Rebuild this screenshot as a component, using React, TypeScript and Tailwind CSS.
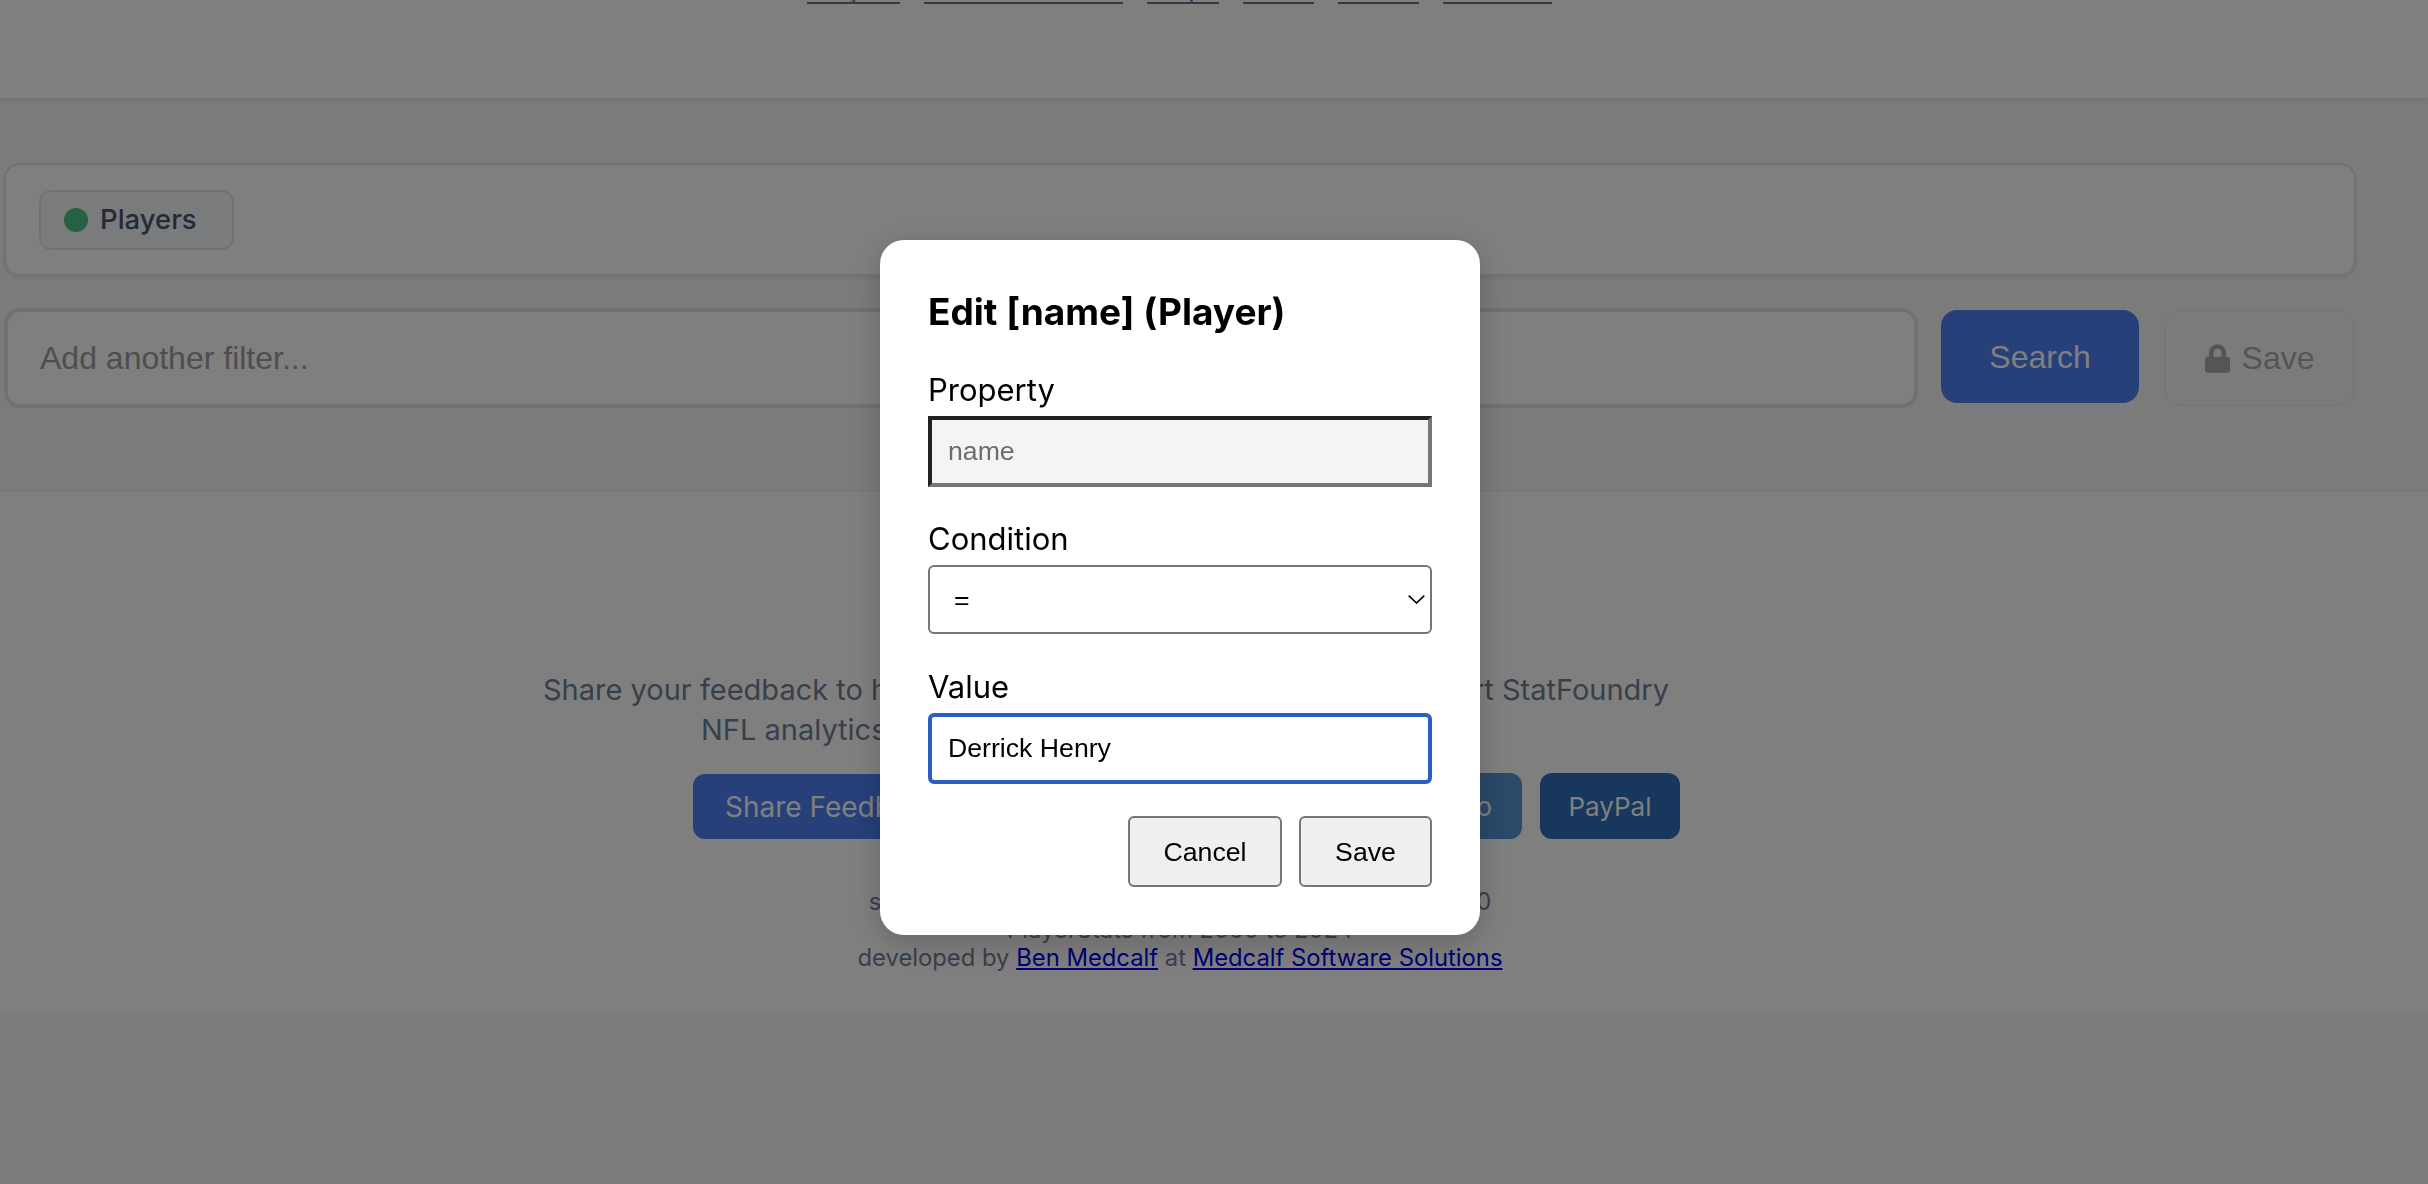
import { FaLock } from 'react-icons/fa'

const sans = "font-['Inter','Liberation_Sans',sans-serif]"
const system = "font-['Liberation_Sans','Arial',sans-serif]"

const navLinks = [
  { label: 'Players', width: 'w-[93px]' },
  { label: 'Leaderboards', width: 'w-[199px]' },
  { label: 'Maps', width: 'w-[72px]' },
  { label: 'Stats', width: 'w-[71px]' },
  { label: 'Teams', width: 'w-[81px]' },
  { label: 'Games', width: 'w-[109px]' },
]

function Header() {
  return (
    <header className="h-[98px] overflow-hidden bg-white shadow-[0_2px_6px_rgba(0,0,0,0.1)] relative">
      <nav className="flex gap-[24px] pl-[807px] -mt-[26px] text-[28px] leading-[28px] text-[#718096]">
        {navLinks.map(link => (
          <a key={link.label} className={`h-[30px] block whitespace-nowrap border-b-2 border-[#667088] ${link.width}`}>
            {link.label}
          </a>
        ))}
      </nav>
    </header>
  )
}

function FilterBar() {
  return (
    <section className="bg-[#f6f7f9] h-[392px] pl-[4px] pt-[65px]">
      <div className="w-[2352px] h-[113px] rounded-[16px] border-2 border-[#e2e5e9] bg-white shadow-[0_2px_4px_rgba(0,0,0,0.1)] pl-[33px] pt-[25px]">
        <div className="w-[195px] h-[60px] rounded-[12px] border-2 border-[#e2e5e9] bg-[#f5f7fa] flex items-center gap-[12px] pl-[23px]">
          <span className="w-[24px] h-[24px] rounded-full bg-[#4fc084]" />
          <span className="text-[27.5px] font-medium text-[#4a5270]">Players</span>
        </div>
      </div>

      <div className="flex items-start mt-[32px]">
        <div className={`${system} w-[1914px] h-[100px] rounded-[16px] border-4 border-[#dde2e8] bg-white flex items-center pl-[32px] text-[32px] text-[#9c9c9c]`}>
          Add another filter...
        </div>
        <button className={`${system} ml-[23px] mt-[2px] w-[198px] h-[93px] rounded-[16px] bg-[#4e80f4] text-white text-[32px]`}>
          Search
        </button>
        <button className={`${system} ml-[25px] mt-[2px] w-[191px] h-[96px] rounded-[16px] border-2 border-[#eeeef2] bg-[#f7f7f8] text-[#aaaaaa] text-[32px] flex items-center justify-center gap-[12px]`}>
          <FaLock className="w-[25px] h-[29px]" />
          Save
        </button>
      </div>
    </section>
  )
}

function Footer() {
  return (
    <footer className="bg-white border-t-2 border-[#eceef1] h-[522px] pt-[178px]">
      <div className="text-[29px] leading-[40px] text-[#718096]">
        <p className="pl-[543px]">Share your feedback to help us improve the site, or donate to support StatFoundry</p>
        <p className="pl-[701px]">NFL analytics and help keep the stats free for all users</p>
      </div>
      <div className="flex items-start ml-[693px] mt-[23px] text-[#ffffff]">
        <a className="w-[264px] h-[65px] mt-[1px] rounded-[12px] bg-[#4e80f4] flex items-center pl-[32px] text-[28px] whitespace-nowrap">Share Feedback</a>
        <a className="ml-[18px] w-[547px] h-[66px] rounded-[12px] bg-[#5494d4] flex items-center justify-end pr-[30px] text-[26px]">Support us on Venmo</a>
        <a className="ml-[18px] w-[140px] h-[66px] rounded-[12px] bg-[#306eb8] flex items-center justify-center text-[26px]">PayPal</a>
      </div>
      <div className="mt-[49px] w-[2360px] text-center text-[23.8px] leading-[28px] text-[#718096]">
        <div>stats updated through the 2024 NFL season, build 1.2.0</div>
        <div>PlayerStats from 2000 to 2024</div>
        <div>
          developed by <a className="text-[#0000ee] underline">Ben Medcalf</a> at{' '}
          <a className="text-[#0000ee] underline">Medcalf Software Solutions</a>
        </div>
      </div>
    </footer>
  )
}

function EditDialog() {
  return (
    <div className="fixed inset-0 bg-black/50">
      <div className={`${sans} ml-[880px] mt-[240px] w-[600px] h-[695px] rounded-[24px] bg-white p-[48px] text-black shadow-[0_8px_32px_rgba(0,0,0,0.2)]`}>
        <h2 className="text-[37px] leading-[48px] font-bold mb-[34px]">Edit [name] (Player)</h2>

        <label className="block text-[31px] leading-[40px] mb-[6px]">Property</label>
        <input
          readOnly
          value="name"
          className={`${system} block w-full h-[71px] px-[16px] text-[26.67px] text-[#6d6d6d] bg-[#f4f4f4] border-4 border-t-[#222222] border-l-[#222222] border-b-[#767676] border-r-[#767676] outline-none`}
        />

        <label className="block text-[31px] leading-[40px] mt-[32px] mb-[6px]">Condition</label>
        <div className="relative">
          <select className={`${system} block w-full h-[69px] pl-[24px] text-[26.67px] bg-white border-2 border-[#767676] rounded-[6px] appearance-none outline-none`}>
            <option>=</option>
          </select>
          <svg className="absolute right-[7px] top-[30px] w-[17px] h-[9px]" viewBox="0 0 17 9" fill="none">
            <path d="M0.7 0.7 L8.5 8 L16.3 0.7" stroke="#000" strokeWidth="1.6" />
          </svg>
        </div>

        <label className="block text-[31px] leading-[40px] mt-[33px] mb-[6px]">Value</label>
        <input
          readOnly
          value="Derrick Henry"
          className={`${system} block w-full h-[71px] px-[16px] text-[26.67px] text-black bg-white border-4 border-[#2a5fc7] rounded-[6px] outline-none`}
        />

        <div className="flex justify-end gap-[17px] mt-[32px]">
          <button className={`${system} w-[154px] h-[71px] text-[26.67px] bg-[#efefef] border-2 border-[#767676] rounded-[6px]`}>Cancel</button>
          <button className={`${system} w-[133px] h-[71px] text-[26.67px] bg-[#efefef] border-2 border-[#767676] rounded-[6px]`}>Save</button>
        </div>
      </div>
    </div>
  )
}

export default function App() {
  return (
    <div className={`${sans} h-screen overflow-hidden bg-[#f6f7f9]`}>
      <Header />
      <FilterBar />
      <Footer />
      <EditDialog />
    </div>
  )
}
